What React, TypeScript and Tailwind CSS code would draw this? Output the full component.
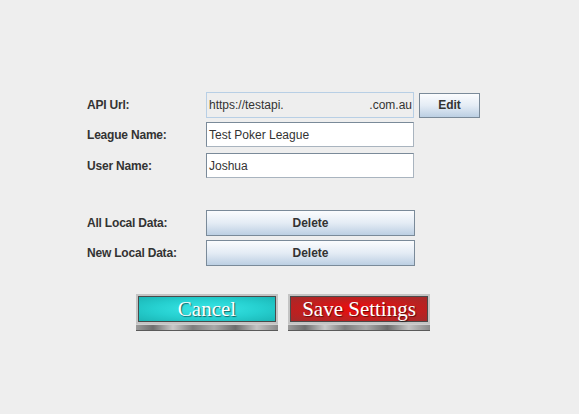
import React from "react";

const FONT = { fontFamily: '"Liberation Sans", Arial, sans-serif' };
const SERIF = { fontFamily: '"Liberation Serif", "Times New Roman", serif' };

function Label({ children }: { children: React.ReactNode }) {
  return <div className="w-[119px] text-[12px] font-bold tracking-[-0.2px] text-[#333333]">{children}</div>;
}

function MetalButton({ children, className = "" }: { children: React.ReactNode; className?: string }) {
  return (
    <button
      className={`border border-[#7a8a99] bg-gradient-to-b from-[#fbfcfe] via-[#e4ecf5] to-[#bccfe3] text-[12px] font-bold text-[#333333] ${className}`}
    >
      {children}
    </button>
  );
}

function Field({ value }: { value: string }) {
  return (
    <div className="flex h-[25px] w-[208px] items-center border border-[#7a8a99] border-r-[#a9b4bf] border-b-[#a9b4bf] bg-white pl-[2px] text-[12px] text-[#333333]">
      {value}
    </div>
  );
}

function FancyButton({ label, kind }: { label: string; kind: "teal" | "red" }) {
  const face =
    kind === "teal"
      ? "bg-[radial-gradient(ellipse_at_center,#3ae8e8_0%,#26d0d0_55%,#1bb6b6_100%)]"
      : "bg-[radial-gradient(ellipse_at_center,#f20a0a_0%,#c81c1c_50%,#a32a2a_100%)]";
  return (
    <div className="flex w-[142px] flex-col">
      <div className="border-2 border-[#c4c4c4] bg-[#9a9a9a]">
        <div
          className={`flex h-[26px] items-center justify-center border border-[#4a4a4a] ${face} text-[21px] leading-none text-white [text-shadow:1px_1px_1px_rgba(0,0,0,0.55)]`}
          style={SERIF}
        >
          {label}
        </div>
      </div>
      <div className="h-[7px] bg-[linear-gradient(90deg,#9b9b9b_0%,#6f6f6f_12%,#c8c8c8_26%,#7d7d7d_40%,#a9a9a9_55%,#6c6c6c_70%,#c2c2c2_85%,#8a8a8a_100%)] shadow-[inset_0_1px_0_#cfcfcf,inset_0_-1px_0_#5a5a5a]" />
    </div>
  );
}

export default function App() {
  return (
    <div className="h-[414px] w-[579px] bg-[#eeeeee] pl-[87px] pt-[92px]" style={FONT}>
      <div className="flex h-[26px] items-center">
        <Label>API Url:</Label>
        <div className="flex h-[26px] w-[208px] items-center justify-between border border-[#b8cfe5] bg-[#eeeeee] pl-[2px] pr-[1px] text-[12px] text-[#333333]">
          <span>https://testapi.</span>
          <span>.com.au</span>
        </div>
        <MetalButton className="ml-[5px] h-[25px] w-[61px]">Edit</MetalButton>
      </div>
      <div className="mt-[4px] flex h-[25px] items-center">
        <Label>League Name:</Label>
        <Field value="Test Poker League" />
      </div>
      <div className="mt-[6px] flex h-[25px] items-center">
        <Label>User Name:</Label>
        <Field value="Joshua" />
      </div>
      <div className="mt-[32px] flex h-[26px] items-center">
        <Label>All Local Data:</Label>
        <MetalButton className="h-[26px] w-[209px]">Delete</MetalButton>
      </div>
      <div className="mt-[4px] flex h-[26px] items-center">
        <Label>New Local Data:</Label>
        <MetalButton className="h-[26px] w-[209px]">Delete</MetalButton>
      </div>
      <div className="ml-[49px] mt-[28px] flex gap-[10px]">
        <FancyButton label="Cancel" kind="teal" />
        <FancyButton label="Save Settings" kind="red" />
      </div>
    </div>
  );
}
